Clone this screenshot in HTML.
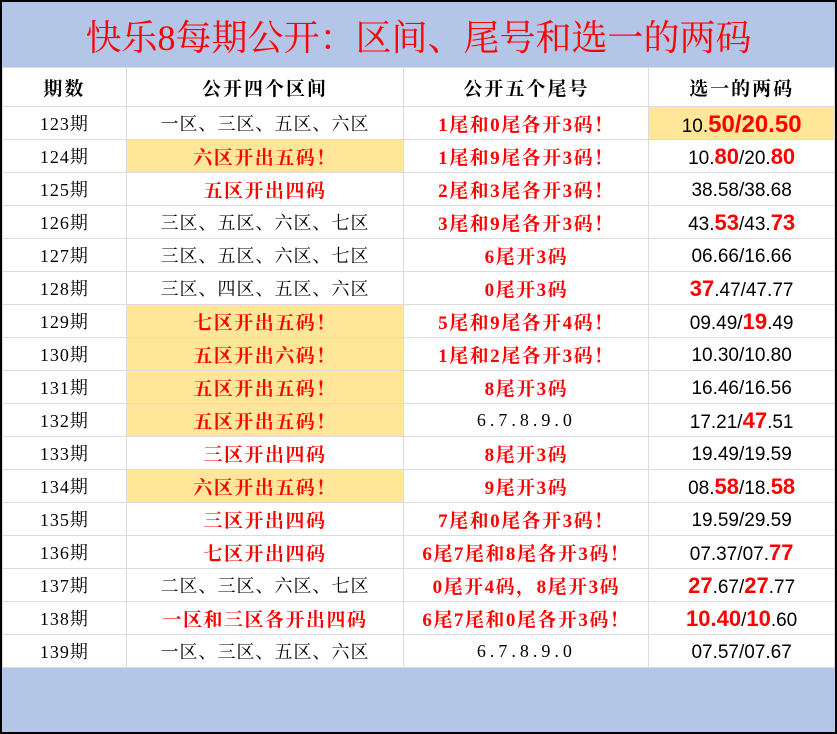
<!DOCTYPE html>
<html><head><meta charset="utf-8"><style>
*{margin:0;padding:0;box-sizing:border-box}
body{width:837px;height:734px;background:#fff;position:relative;overflow:hidden}
#wrap{position:absolute;left:0;top:0;width:837px;height:734px;border:2px solid #000;background:#b4c6e7}
#title{position:absolute;left:0;top:8px;width:833px;height:57px;text-align:center;line-height:60px;color:#f00;font:36px "Liberation Serif","Noto Serif CJK SC",serif}
table{position:absolute;left:0;top:65px;border-collapse:collapse;background:#fff;table-layout:fixed}
td{border:1px solid #dcdcdc;text-align:center;height:33px;line-height:1;font:18px "Liberation Serif","Noto Serif CJK SC",serif;color:#000;white-space:nowrap;padding:0;letter-spacing:1px;vertical-align:middle}
tr.h td{height:39px;font-weight:bold;font-size:19px;letter-spacing:2px}
.r{color:#f00;font-weight:bold;letter-spacing:1.5px;font-size:19px}
.y{background:#ffe699}
.d{letter-spacing:4px}
.n{font-family:"Liberation Sans","Noto Sans CJK SC",sans-serif;font-size:19px;letter-spacing:0;padding-top:4px}
.n b{color:#f00;font-size:22px;line-height:1}
.big b{font-size:24px}
</style></head><body><div id="wrap">
<div id="title">快乐8每期公开：区间、尾号和选一的两码</div>
<table>
<colgroup><col style="width:124px"><col style="width:278px"><col style="width:245px"><col style="width:186px"></colgroup>
<tr class="h"><td>期数</td><td>公开四个区间</td><td>公开五个尾号</td><td>选一的两码</td></tr>
<tr><td>123期</td><td>一区、三区、五区、六区</td><td class="r">1尾和0尾各开3码！</td><td class="n y big">10.<b>50/20.50</b></td></tr>
<tr><td>124期</td><td class="r y">六区开出五码！</td><td class="r">1尾和9尾各开3码！</td><td class="n">10.<b>80</b>/20.<b>80</b></td></tr>
<tr><td>125期</td><td class="r">五区开出四码</td><td class="r">2尾和3尾各开3码！</td><td class="n">38.58/38.68</td></tr>
<tr><td>126期</td><td>三区、五区、六区、七区</td><td class="r">3尾和9尾各开3码！</td><td class="n">43.<b>53</b>/43.<b>73</b></td></tr>
<tr><td>127期</td><td>三区、五区、六区、七区</td><td class="r">6尾开3码</td><td class="n">06.66/16.66</td></tr>
<tr><td>128期</td><td>三区、四区、五区、六区</td><td class="r">0尾开3码</td><td class="n"><b>37</b>.47/47.77</td></tr>
<tr><td>129期</td><td class="r y">七区开出五码！</td><td class="r">5尾和9尾各开4码！</td><td class="n">09.49/<b>19</b>.49</td></tr>
<tr><td>130期</td><td class="r y">五区开出六码！</td><td class="r">1尾和2尾各开3码！</td><td class="n">10.30/10.80</td></tr>
<tr><td>131期</td><td class="r y">五区开出五码！</td><td class="r">8尾开3码</td><td class="n">16.46/16.56</td></tr>
<tr><td>132期</td><td class="r y">五区开出五码！</td><td class="d">6.7.8.9.0</td><td class="n">17.21/<b>47</b>.51</td></tr>
<tr><td>133期</td><td class="r">三区开出四码</td><td class="r">8尾开3码</td><td class="n">19.49/19.59</td></tr>
<tr><td>134期</td><td class="r y">六区开出五码！</td><td class="r">9尾开3码</td><td class="n">08.<b>58</b>/18.<b>58</b></td></tr>
<tr><td>135期</td><td class="r">三区开出四码</td><td class="r">7尾和0尾各开3码！</td><td class="n">19.59/29.59</td></tr>
<tr><td>136期</td><td class="r">七区开出四码</td><td class="r">6尾7尾和8尾各开3码！</td><td class="n">07.37/07.<b>77</b></td></tr>
<tr><td>137期</td><td>二区、三区、六区、七区</td><td class="r">0尾开4码，8尾开3码</td><td class="n"><b>27</b>.67/<b>27</b>.77</td></tr>
<tr><td>138期</td><td class="r">一区和三区各开出四码</td><td class="r">6尾7尾和0尾各开3码！</td><td class="n"><b>10.40</b>/<b>10</b>.60</td></tr>
<tr><td>139期</td><td>一区、三区、五区、六区</td><td class="d">6.7.8.9.0</td><td class="n">07.57/07.67</td></tr>
</table>
</div></body></html>
